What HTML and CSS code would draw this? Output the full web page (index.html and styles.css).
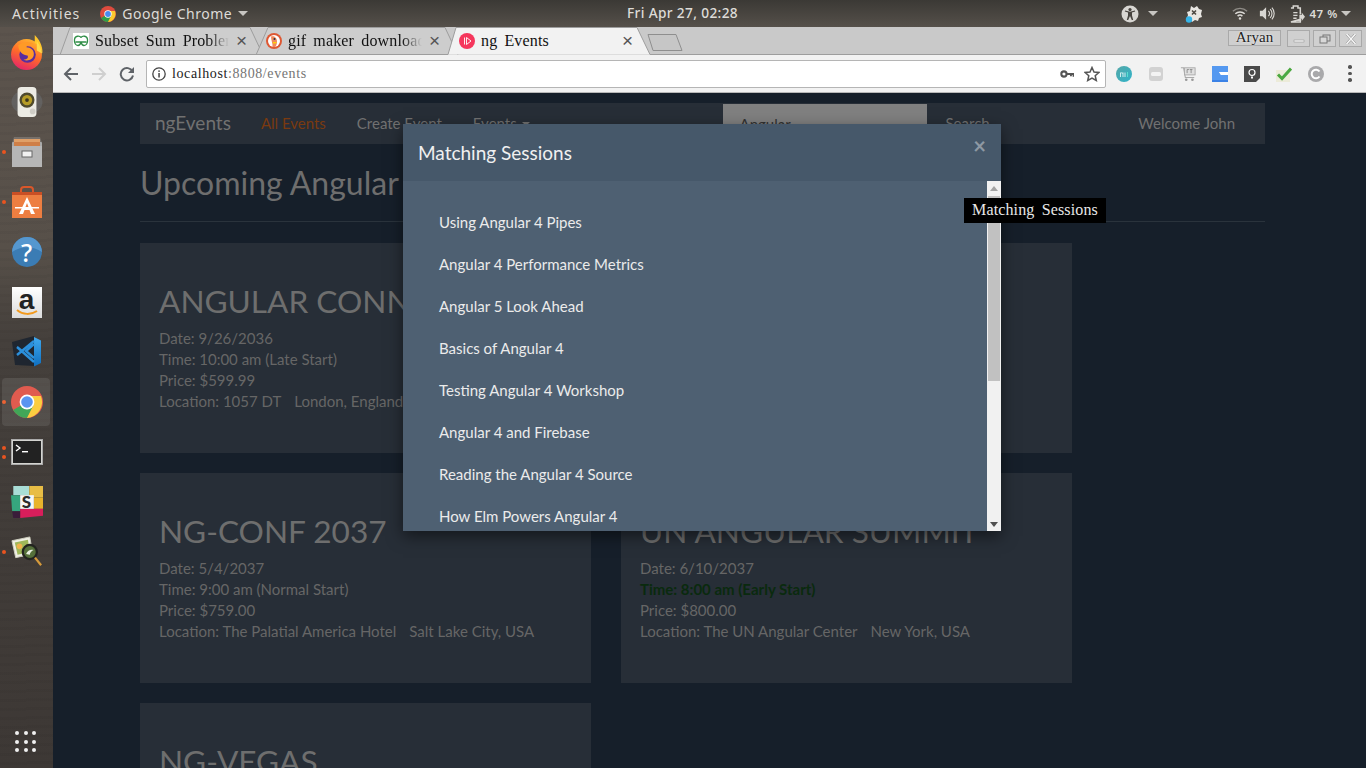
FILE: index.html
```html
<!DOCTYPE html>
<html lang="en">
<head>
<meta charset="utf-8">
<title>ng Events</title>
<link rel="stylesheet" href="styles.css">
</head>
<body>
<svg class="defs" width="0" height="0">
  <defs>
    <linearGradient id="fx" x1="0.7" y1="0" x2="0.3" y2="1"><stop offset="0" stop-color="#ffb52e"/><stop offset=".5" stop-color="#ff6a2a"/><stop offset="1" stop-color="#e3246a"/></linearGradient>
    <linearGradient id="vs" x1="0" y1="0" x2="0" y2="1"><stop offset="0" stop-color="#3fa9f0"/><stop offset="1" stop-color="#0f6fc0"/></linearGradient>
    <linearGradient id="mi" x1="0" y1="0" x2="1" y2="1"><stop offset="0" stop-color="#55a7a8"/><stop offset="1" stop-color="#2fb3c9"/></linearGradient>
    <symbol id="chrome" viewBox="0 0 32 32">
      <circle cx="16" cy="16" r="16" fill="#dd4b3e"/>
      <path d="M16 16 2.100 24A16 16 0 0 0 16 32l8-14z" fill="#2f9e48"/>
      <path d="M16 10h13.900A16 16 0 0 1 16 32l7-14z" fill="#fbc92e"/>
      <circle cx="16" cy="16" r="7.400" fill="#fff"/>
      <circle cx="16" cy="16" r="5.800" fill="#4a8bf0"/>
    </symbol>
  </defs>
</svg>

<header class="topbar">
  <div class="top-left">
    <span class="activities">Activities</span>
    <svg class="app-icon" viewBox="0 0 32 32"><use href="#chrome"/></svg>
    <span class="app-name">Google Chrome</span>
    <span class="caret"></span>
  </div>
  <div class="clock">Fri Apr 27, 02:28</div>
  <div class="top-right">
    <svg class="ti ti-a11y" viewBox="0 0 18 18"><circle cx="9" cy="9" r="8.500" fill="#d8d6d2"/><circle cx="9" cy="4.600" r="1.600" fill="#47433e"/><path d="M3.800 6.600 7 7.600v3L5.800 15h1.400L9 11l1.800 4h1.400L11 10.600v-3l3.200-1-.3-1.100L9 6.800 4.100 5.500z" fill="#47433e"/></svg>
    <span class="caret caret-a11y"></span>
    <svg class="ti ti-gear" viewBox="0 0 18 18"><path d="M6 1 9 3l3-2 2 3 3 1-1 4 1 3-3 1-1 3-3-1-3 2-2-3-3-1 1-3-1-3 3-1z" fill="#e8e6e2"/><path d="M7 5.500 11 9.500M11 5.500 7 9.500" stroke="#4c4842" stroke-width="1.600"/><circle cx="4" cy="14.500" r="3.200" fill="#35b4e8"/></svg>
    <svg class="ti ti-wifi" viewBox="0 0 18 14"><path d="M1 4.500a11.500 11.500 0 0 1 16 0" fill="none" stroke="#8f8c87" stroke-width="1.500"/><path d="M3.700 7.300a7.700 7.700 0 0 1 10.600 0M6.300 10a4 4 0 0 1 5.400 0" fill="none" stroke="#dddbd7" stroke-width="1.700"/><circle cx="9" cy="12.500" r="1.400" fill="#dddbd7"/></svg>
    <svg class="ti ti-vol" viewBox="0 0 18 16"><path d="M1 5h3l4-4v14l-4-4H1z" fill="#d8d6d2"/><path d="M10.500 5a4 4 0 0 1 0 6M12.500 3a7 7 0 0 1 0 10M14.500 1.500a9.500 9.500 0 0 1 0 13" fill="none" stroke="#d8d6d2" stroke-width="1.300"/></svg>
    <svg class="ti ti-bat" viewBox="0 0 16 19"><path d="M1 3h2.500V1h5v2H11v7M11 15v3H1z" fill="none" stroke="#d8d6d2" stroke-width="1.600"/><path d="M3.500 8H8M3.500 11H8M3.500 14H7" stroke="#d8d6d2" stroke-width="1.400"/><path d="M10 10.500h2.500V8l3.500 4.500-3.500 4.500v-2.500H10z" fill="#d8d6d2"/></svg>
    <span class="battery">47 %</span>
    <span class="caret caret-bat"></span>
  </div>
</header>

<div class="desktop">
  <nav class="dock">
    <div class="dock-item dock-fx">
      <svg viewBox="0 0 32 34"><circle cx="16" cy="19" r="15" fill="url(#fx)"/><path d="M24 0c4 4 8 10 7.500 18C30 13 28 9 24 8z" fill="#ffc62a"/><path d="M26 6c3 4 5 8 5 12l-5-3z" fill="#ffd84a"/><circle cx="17" cy="19" r="8" fill="#5b2d9f"/><path d="M8 10c5-4 12-4 15-1-3 0-7 0-7 3 4 0 8 3 7 8-1 4-6 6-10 4 4 0 5-2 4-4-4 0-9-4-9-10z" fill="#ff9a26"/></svg>
    </div>
    <div class="dock-item">
      <svg viewBox="0 0 34 34"><ellipse cx="17" cy="17" rx="16.500" ry="13" fill="#6c7074" opacity=".5"/><rect x="7" y="1" width="20" height="32" rx="4" fill="#ecebe4"/><circle cx="17" cy="15" r="8" fill="#4f4a2c"/><circle cx="17" cy="15" r="5.500" fill="#b59c26"/><circle cx="17" cy="15" r="2" fill="#3a361f"/><circle cx="23" cy="27" r="3" fill="#cfcdc6"/></svg>
    </div>
    <div class="dock-item has-dot">
      <svg viewBox="0 0 32 32"><path d="M3 1h26l2 6H1z" fill="#77706a"/><rect x="1" y="6" width="30" height="25" rx="1" fill="#a9a9a9"/><rect x="3" y="3" width="26" height="7" fill="#e0a068"/><rect x="3" y="6" width="26" height="4" fill="#cf7f47"/><rect x="1" y="10" width="30" height="21" fill="#b6b6b6"/><rect x="11" y="15" width="10" height="6" fill="#f1f1f1" stroke="#666"/></svg>
    </div>
    <div class="dock-item has-dot">
      <svg viewBox="0 0 32 32"><path d="M10 8V4q0-3 3-3h6q3 0 3 3v4" fill="none" stroke="#d9572a" stroke-width="2"/><path d="M1 6h30v26H1z" fill="#ed7e41"/><path d="M1 6h30v3H1z" fill="#c94f25"/><path d="M16 11 8 28h4l1.500-4h5l1.500 4h4zm0 6 1.500 4h-3z" fill="#fff"/><rect x="4" y="21" width="24" height="1.500" fill="#fff"/></svg>
    </div>
    <div class="dock-item">
      <svg viewBox="0 0 30 30"><circle cx="15" cy="15" r="14" fill="#3b7cb4"/><path d="M1 15a14 14 0 0 1 28 0 24 24 0 0 0-28 0z" fill="#5597cf"/></svg>
      <span class="help-mark">?</span>
    </div>
    <div class="dock-item">
      <span class="amazon">a<svg viewBox="0 0 24 8"><path d="M2 1c6 5 14 5 20 1" fill="none" stroke="#f29a1e" stroke-width="2"/></svg></span>
    </div>
    <div class="dock-item">
      <svg viewBox="0 0 32 32"><path d="M1 6 23 0l1 30-20-1z" fill="#1f2630"/><path d="M23 1l7 3.500V27l-7 3.500z" fill="url(#vs)"/><path d="m23 8-8 7 8 7M6 11l5 4-5 4M6 19 23 5M6 11l17 15" fill="none" stroke="#2b8fdb" stroke-width="2.400"/></svg>
    </div>
    <div class="dock-item is-active has-dot">
      <svg viewBox="0 0 32 32"><use href="#chrome"/></svg>
    </div>
    <div class="dock-item has-dot has-two">
      <svg viewBox="0 0 32 26"><rect x=".5" y=".5" width="31" height="25" fill="#d4d4d0" stroke="#aaa"/><rect x="2" y="2" width="28" height="22" fill="#222"/><path d="M5 6l4 3-4 3" fill="none" stroke="#fff" stroke-width="1.400"/><rect x="11" y="12" width="6" height="1.400" fill="#fff"/></svg>
    </div>
    <div class="dock-item">
      <svg viewBox="0 0 28 28"><path d="M2 0h14v8H2z" fill="#a9ddd6"/><path d="M16 0h12v10H16z" fill="#e8bd45"/><path d="M0 8h8v14H1z" fill="#36a67e"/><path d="M20 10h8v10h-8z" fill="#e9b32c"/><path d="M8 20h20v6L8 28z" fill="#d81e5b"/><path d="M1 22h7v6H2z" fill="#3a1d3a"/><rect x="8" y="8" width="12" height="12" fill="#f6f6f6"/></svg>
      <span class="slack-s">S</span>
    </div>
    <div class="dock-item has-dot">
      <svg viewBox="0 0 34 34"><path d="M1 5 20 1l3 18-18 4z" fill="#efefe4" stroke="#cfcfc0"/><path d="M4 7l14-3 2 13-13 3z" fill="#9fb75a"/><circle cx="9" cy="11" r="3" fill="#efb24a"/><circle cx="20" cy="17" r="7.500" fill="#55703a" stroke="#23241f" stroke-width="2.400"/><path d="M16 19c2-4 5-5 8-4-2 1-4 3-4 5z" fill="#e8eee0"/><path d="M25.500 23l6.500 8" stroke="#d59a3b" stroke-width="2.400"/></svg>
    </div>
    <div class="dock-grid">
      <i></i><i></i><i></i><i></i><i></i><i></i><i></i><i></i><i></i>
    </div>
  </nav>

  <main class="browser">
    <div class="tabstrip">
      <svg class="tab-shapes" width="1313" height="28" viewBox="0 0 1313 28">
        <path d="M7 28 17 .5H197L210 28" fill="#cdcdcd" stroke="#9d9d9d"/>
        <path d="M203 28 215 .5H392L405 28" fill="#cdcdcd" stroke="#9d9d9d"/>
        <path d="M0 27.500H395L403 .5H584L597 27.500H1313" fill="#f2f2f2" stroke="#9d9d9d"/>
        <path d="M595 7.500H623L629 23.500H600z" fill="#c6c6c6" stroke="#8e8e8e"/>
      </svg>
      <div class="tabs">
        <div class="tab tab-one">
          <svg class="favicon" viewBox="0 0 16 16"><rect width="16" height="16" fill="#fff"/><path d="M8 4.500C6.500 2.500 2 2.500 1.500 6.500S3 12.500 5 12.500 7.500 11 8 9H2.500M8 4.500C9.500 2.500 14 2.500 14.500 6.500S13 12.500 11 12.500 8.500 11 8 9H13.500" fill="none" stroke="#2f8d46" stroke-width="1.300"/></svg>
          <span class="tab-title">Subset Sum Problem</span>
          <span class="tab-close">×</span>
        </div>
        <div class="tab tab-two">
          <svg class="favicon" viewBox="0 0 16 16"><circle cx="8" cy="8" r="8" fill="#de5833"/><circle cx="8" cy="8" r="6" fill="#fff"/><path d="M5 3.500c3-1 6 1 6 5 0 3-1 4.500-2 5.500H6.500C7 11 5 7 5 3.500z" fill="#f08a5d"/><circle cx="8.500" cy="6" r="1" fill="#234"/><path d="M7 9h4l-1.500 1.500H7z" fill="#fdd20a"/></svg>
          <span class="tab-title">gif maker download</span>
          <span class="tab-close">×</span>
        </div>
        <div class="tab tab-three">
          <svg class="favicon" viewBox="0 0 16 16"><circle cx="8" cy="8" r="8" fill="#f5365c"/><path d="M5.500 4.500v7M7.500 4.500l4.500 3.500-4.500 3.500z" fill="none" stroke="#fff" stroke-width=".9"/></svg>
          <span class="tab-title tab-title-active">ng Events</span>
          <span class="tab-close">×</span>
        </div>
      </div>
      <div class="win-controls">
        <span class="win-user">Aryan</span>
        <span class="win-btn"><svg viewBox="0 0 14 10"><rect x="2" y="6" width="10" height="2" fill="#f4f4f4" stroke="#8d8d8d" stroke-width=".5"/></svg></span>
        <span class="win-btn"><svg viewBox="0 0 14 10"><rect x="5" y="1" width="7" height="6" fill="none" stroke="#777"/><rect x="2" y="3" width="7" height="6" fill="#d8d8d8" stroke="#777"/></svg></span>
        <span class="win-btn"><svg viewBox="0 0 14 10"><path d="M2.500 0 11.500 10M11.500 0 2.500 10" stroke="#8d8d8d" stroke-width="2.400"/><path d="M2.500 0 11.500 10M11.500 0 2.500 10" stroke="#f8f8f8" stroke-width="1.500"/></svg></span>
      </div>
    </div>

    <div class="toolbar">
      <svg class="tb-icon" viewBox="0 0 16 16"><path d="M15 8H2M8 2 2 8l6 6" fill="none" stroke="#5f6368" stroke-width="2"/></svg>
      <svg class="tb-icon" viewBox="0 0 16 16"><path d="M1 8h13M8 2l6 6-6 6" fill="none" stroke="#cfcfcf" stroke-width="2"/></svg>
      <svg class="tb-icon" viewBox="0 0 16 16"><path d="M13.500 5.500A6.200 6.200 0 1 0 14 9.500" fill="none" stroke="#5f6368" stroke-width="2"/><path d="M15 1v6H9z" fill="#5f6368"/></svg>
      <div class="omnibox">
        <svg class="omni-info" viewBox="0 0 14 14"><circle cx="7" cy="7" r="6.200" fill="none" stroke="#444" stroke-width="1.300"/><rect x="6.300" y="6" width="1.500" height="4.500" fill="#444"/><rect x="6.300" y="3.400" width="1.500" height="1.500" fill="#444"/></svg>
        <span class="url"><b>localhost</b>:8808/events</span>
        <svg class="omni-key" viewBox="0 0 16 10"><circle cx="4.500" cy="5" r="3" fill="none" stroke="#555" stroke-width="2.400"/><path d="M7 5h8.500v3M12.500 5v2.500" fill="none" stroke="#555" stroke-width="2.200"/></svg>
        <svg class="omni-star" viewBox="0 0 16 16"><path d="m8 1.500 2 4.500 4.800.5-3.600 3.200 1.100 4.800L8 12l-4.300 2.500 1.100-4.800L1.200 6.500 6 6z" fill="none" stroke="#555" stroke-width="1.500"/></svg>
      </div>
      <div class="extensions">
        <span class="ext"><svg viewBox="0 0 16 16"><circle cx="8" cy="8" r="8" fill="url(#mi)"/><path d="M4.500 11V6.500M7 11V6.500M4.500 7.500q1.200-1.500 2.500 0M9 11V6.500" fill="none" stroke="#cfeef0" stroke-width="1"/><path d="M11.500 11V6" stroke="#58e0d0"/></svg></span>
        <span class="ext"><svg viewBox="0 0 16 16"><rect x="1" y="1" width="14" height="14" rx="3" fill="#d2d2d2"/><rect x="3" y="6" width="10" height="4" rx="1.500" fill="#f3f3f3"/></svg></span>
        <span class="ext"><svg viewBox="0 0 18 18"><path d="M1 2h3l2 11h10" fill="none" stroke="#a9a9a9" stroke-width="1.200"/><rect x="5" y="2" width="12" height="8" fill="#dfdfdf" stroke="#a9a9a9"/><circle cx="7" cy="15.500" r="1.500" fill="#999"/><circle cx="14" cy="15.500" r="1.500" fill="#999"/><path d="M8 4h2M8 4v4M11 4h3M12.500 4v4" stroke="#888"/></svg></span>
        <span class="ext"><svg viewBox="0 0 16 16"><rect width="16" height="16" fill="#eaf2fd"/><rect width="16" height="6" fill="#5599f0"/><path d="M0 6h7l2 3h7v5H0z" fill="#5599f0"/><path d="M7 6h9v3H9z" fill="#fff"/><rect y="14" width="16" height="2" fill="#3b82e6"/></svg></span>
        <span class="ext"><svg viewBox="0 0 16 16"><path d="M0 0h16v12l-4 4H0z" fill="#4a4a4a"/><circle cx="8" cy="6.500" r="3" fill="none" stroke="#fff" stroke-width="1.200"/><path d="M7 10.500h2v2H7z" fill="#fff"/></svg></span>
        <span class="ext"><svg viewBox="0 0 16 16"><rect x="0" y="4" width="14" height="12" fill="#ecebd9"/><path d="M2 8.500 6 12.500 15 2.500" fill="none" stroke="#4aa83e" stroke-width="3"/></svg></span>
        <span class="ext"><svg viewBox="0 0 16 16"><circle cx="8" cy="8" r="8" fill="#a9a9ab"/><path d="M11.500 5.500a4.300 4.300 0 1 0 0 5" fill="none" stroke="#fff" stroke-width="2"/></svg></span>
        <span class="ext-menu"><i></i><i></i><i></i></span>
      </div>
    </div>

    <div class="page">
      <div class="container">
        <div class="navbar">
          <span class="brand">ngEvents</span>
          <span class="nav-link nav-current">All Events</span>
          <span class="nav-link nav-create">Create Event</span>
          <span class="nav-link nav-events">Events <span class="nav-caret"></span></span>
          <span class="nav-input">Angular</span>
          <span class="nav-link nav-search">Search</span>
          <span class="nav-link nav-welcome">Welcome John</span>
        </div>
        <h1 class="heading">Upcoming Angular Events</h1>
        <div class="grid">
          <article class="card">
            <h2>ANGULAR CONNECT</h2>
            <p>Date: 9/26/2036</p>
            <p>Time: 10:00 am (Late Start)</p>
            <p>Price: $599.99</p>
            <p>Location: 1057 DT<span class="loc-gap">London, England</span></p>
          </article>
          <article class="card">
            <h2>NG-NL</h2>
            <p>Date: 4/15/2037</p>
            <p>Time: 9:00 am (Normal Start)</p>
            <p>Price: $950.00</p>
            <p>Location: The Palatial America Hotel</p>
          </article>
          <article class="card">
            <h2>NG-CONF 2037</h2>
            <p>Date: 5/4/2037</p>
            <p>Time: 9:00 am (Normal Start)</p>
            <p>Price: $759.00</p>
            <p>Location: The Palatial America Hotel<span class="loc-gap">Salt Lake City, USA</span></p>
          </article>
          <article class="card">
            <h2>UN ANGULAR SUMMIT</h2>
            <p>Date: 6/10/2037</p>
            <p class="early">Time: 8:00 am (Early Start)</p>
            <p>Price: $800.00</p>
            <p>Location: The UN Angular Center<span class="loc-gap">New York, USA</span></p>
          </article>
          <article class="card">
            <h2>NG-VEGAS</h2>
          </article>
        </div>
      </div>

      <section class="modal">
        <div class="modal-head">
          <span class="modal-title">Matching Sessions</span>
          <span class="modal-close">×</span>
        </div>
        <div class="modal-body">
          <ul class="sessions">
            <li>Using Angular 4 Pipes</li>
            <li>Angular 4 Performance Metrics</li>
            <li>Angular 5 Look Ahead</li>
            <li>Basics of Angular 4</li>
            <li>Testing Angular 4 Workshop</li>
            <li>Angular 4 and Firebase</li>
            <li>Reading the Angular 4 Source</li>
            <li>How Elm Powers Angular 4</li>
          </ul>
          <div class="scrollbar">
            <span class="sb-up"></span>
            <span class="sb-track"><span class="sb-thumb"></span></span>
            <span class="sb-down"></span>
          </div>
        </div>
      </section>
      <div class="tooltip">Matching Sessions</div>
    </div>
  </main>
</div>
</body>
</html>
```

FILE: styles.css
```css
* { box-sizing: border-box; }
html, body { margin: 0; height: 100%; overflow: hidden; }
body { display: flex; flex-direction: column; width: 1366px; height: 768px; font-family: Lato, sans-serif; background: #161f2a; }
.defs { position: absolute; }
svg { display: block; }

/* GNOME top bar */
.topbar { position: relative; flex: 0 0 27px; display: flex; align-items: center; justify-content: space-between; background: linear-gradient(#3b3935, #55504a); color: #dedcd8; font: 14px "Noto Sans", "Open Sans", sans-serif; letter-spacing: .35px; }
.top-left { display: flex; align-items: center; padding-left: 12px; }
.activities { letter-spacing: 1px; }
.app-icon { width: 16px; height: 16px; margin-left: 20px; }
.app-name { margin-left: 6px; letter-spacing: .5px; }
.caret { display: inline-block; width: 0; height: 0; border-left: 5px solid transparent; border-right: 5px solid transparent; border-top: 5px solid #c8c6c2; margin-left: 6px; }
.clock { position: absolute; left: 627px; top: 3px; font-weight: 500; font-size: 13.700px; }
.top-right { display: flex; align-items: center; padding-right: 15px; }
.ti-a11y { width: 18px; height: 18px; }
.caret-a11y { margin-left: 9px; }
.ti-gear { width: 18px; height: 18px; margin-left: 27px; }
.ti-wifi { width: 16px; height: 13px; margin-left: 29px; }
.ti-vol { width: 16px; height: 15px; margin-left: 11px; }
.ti-bat { width: 15px; height: 18px; margin-left: 15px; }
.battery { margin-left: 4px; font-size: 11.500px; font-weight: 600; letter-spacing: .6px; }
.caret-bat { margin-left: 3px; }

.desktop { flex: 1; display: flex; min-height: 0; }

/* dock */
.dock { position: relative; flex: 0 0 53px; display: flex; flex-direction: column; padding-bottom: 1px; background: repeating-linear-gradient(178deg, rgba(0,0,0,0) 0 6px, rgba(0,0,0,.03) 6px 9px), linear-gradient(#5c544d 0, #575049 30%, #45403c 42%, #3d3835 100%); }
.dock-item { position: relative; flex: 0 0 50px; display: flex; align-items: center; justify-content: center; }
.dock-item > svg { width: 32px; height: 32px; }
.dock-fx > svg { width: 33px; height: 35px; }
.has-dot::before { content: ""; position: absolute; left: 2px; top: 23px; width: 4px; height: 4px; border-radius: 50%; background: #e95420; }
.has-two::before { top: 19px; box-shadow: 0 9px 0 #e95420; }
.is-active::after { content: ""; position: absolute; left: 2px; top: 1px; width: 48px; height: 48px; border-radius: 4px; background: rgba(255,255,255,.09); }
.help-mark { position: absolute; left: 0; right: 0; top: 8px; text-align: center; color: #fff; font: 500 25px "Noto Sans", sans-serif; }
.amazon { position: relative; width: 30px; height: 31px; background: linear-gradient(#fff, #dcdcdc); color: #222; font: 700 28px/25px "Liberation Sans", sans-serif; text-align: center; }
.amazon svg { position: absolute; left: 3px; bottom: 1px; width: 24px; height: 8px; }
.slack-s { position: absolute; left: 0; right: 0; top: 14px; text-align: center; font: 900 17px "Lato", sans-serif; color: #2b2b2b; }
.dock-grid { margin-top: auto; margin-left: 15px; margin-bottom: 15px; width: 22px; display: grid; grid-template-columns: repeat(3, 4px); gap: 4.500px; }
.dock-grid i { width: 4px; height: 4px; border-radius: 50%; background: #f0f0f0; }

/* browser frame */
.browser { flex: 1; display: flex; flex-direction: column; min-width: 0; }
.tabstrip { position: relative; flex: 0 0 28px; background: #c9c9c9; }
.tab-shapes { position: absolute; left: 0; top: 0; }
.tabs { position: relative; display: flex; height: 28px; }
.tab { display: flex; align-items: center; position: relative; height: 28px; }
.tab-one { width: 195px; padding-left: 20px; }
.tab-two { width: 193px; padding-left: 18px; }
.tab-three { width: 192px; padding-left: 18px; }
.tab .favicon { flex: 0 0 16px; width: 16px; height: 16px; }
.tab-title { font: 16px "Liberation Serif", serif; letter-spacing: .15px; word-spacing: 3px; color: #111; margin-left: 6px; width: 134px; white-space: nowrap; overflow: hidden; -webkit-mask-image: linear-gradient(90deg, #000 85%, transparent); mask-image: linear-gradient(90deg, #000 85%, transparent); }
.tab-title-active { width: 141px; -webkit-mask-image: none; mask-image: none; }
.tab-close { margin-left: 7px; font: 19px/20px "Liberation Sans", sans-serif; color: #555; }
.win-controls { position: absolute; right: 4px; top: 3px; display: flex; gap: 3px; }
.win-user { width: 53px; height: 16px; margin-right: 3px; border: 1px solid #a9a9a9; background: #cfcfcf; font: 15px/13px "Liberation Serif", serif; text-align: center; color: #222; text-shadow: 0 0 2px #fff; }
.win-btn { width: 23px; height: 17px; border: 1px solid #a9a9a9; background: #d0d0d0; display: flex; align-items: center; justify-content: center; }
.win-btn svg { width: 14px; height: 10px; }

.toolbar { flex: 0 0 38px; display: flex; align-items: center; background: #f2f2f2; border-bottom: 1px solid #b8b8b8; padding-left: 10px; }
.tb-icon { width: 16px; height: 16px; margin-right: 12px; }
.omnibox { width: 960px; height: 28px; margin-left: -1px; display: flex; align-items: center; background: #fff; border: 1px solid #b5b5b5; border-radius: 2px; padding: 0 5px; }
.omni-info { width: 14px; height: 14px; }
.url { margin-left: 6px; font: 14px "Liberation Serif", "DejaVu Serif", serif; letter-spacing: .6px; color: #757575; }
.url b { font-weight: 400; color: #222; }
.omni-key { width: 14px; height: 10px; margin-left: auto; }
.omni-star { width: 16px; height: 16px; margin-left: 10px; }
.extensions { display: flex; align-items: center; margin-left: 10px; gap: 16px; }
.ext { display: block; width: 16px; height: 16px; }
.ext svg { width: 16px; height: 16px; }
.ext-menu { display: flex; flex-direction: column; gap: 3px; margin-left: 8px; }
.ext-menu i { width: 3.500px; height: 3.500px; border-radius: 50%; background: #555; }

/* page beneath the modal backdrop */
.page { position: relative; flex: 1; overflow: hidden; background: #161f2a; color: #717171; }
.container { padding: 10px 0 0 87px; width: 1212px; }
.navbar { position: relative; height: 41px; padding-bottom: 2px; display: flex; align-items: center; background: #272e37; font-size: 15px; }
.brand { margin-left: 15px; font-size: 19px; }
.nav-link { font-size: 15px; }
.nav-current { margin-left: 30px; color: #7a3a10; }
.nav-create { margin-left: 31px; }
.nav-events { margin-left: 31px; }
.nav-caret { display: inline-block; width: 0; height: 0; margin-left: 1px; border-left: 4px solid transparent; border-right: 4px solid transparent; border-top: 4px solid #717171; vertical-align: 3px; }
.nav-input { margin-left: 193px; width: 204px; height: 40px; align-self: flex-start; margin-top: 1px; padding: 11px 17px; background: #808080; color: #333; font-size: 15px; }
.nav-search { margin-left: 19px; }
.nav-welcome { margin-left: auto; margin-right: 30px; }
.heading { margin: 0; height: 78px; padding-top: 15px; border-bottom: 1px solid #2a333c; font: 400 32px/47px Lato, sans-serif; white-space: nowrap; color: #6e6e6e; }
.grid { display: grid; grid-template-columns: 451px 451px; gap: 20px 30px; margin-top: 21px; }
.card { height: 210px; background: #272e37; padding: 36px 19px 0; }
.card h2 { margin: 0 0 5px; font: 400 31.600px/44px Lato, sans-serif; white-space: nowrap; color: #6e6e6e; }
.card p { margin: 0; font-size: 15px; line-height: 21px; white-space: nowrap; color: #666; }
.card .early { color: #0a2a0e; font-weight: 700; }
.loc-gap { margin-left: 13px; }

/* modal */
.modal { position: absolute; left: 350px; top: 31px; width: 598px; height: 407px; display: flex; flex-direction: column; box-shadow: 0 5px 15px rgba(0,0,0,.5); }
.modal-head { flex: 0 0 57px; position: relative; display: flex; align-items: center; padding-left: 15px; background: #46586a; }
.modal-title { color: #f0f0f0; font-size: 19px; }
.modal-close { position: absolute; right: 15px; top: 8px; font: 700 22px/28px Lato, sans-serif; color: #8e99a4; }
.modal-body { flex: 1; display: flex; min-height: 0; background: #4e6072; overflow: hidden; }
.sessions { flex: 1; margin: 0; padding: 20px 0 0 36px; list-style: none; color: #ebebeb; font-size: 15px; }
.sessions li { height: 42px; line-height: 42px; }
.scrollbar { flex: 0 0 14px; display: flex; flex-direction: column; background: #f1f1f1; }
.sb-up, .sb-down { flex: 0 0 15px; position: relative; }
.sb-up::after, .sb-down::after { content: ""; position: absolute; left: 3px; border-left: 4px solid transparent; border-right: 4px solid transparent; }
.sb-up::after { top: 5px; border-bottom: 5px solid #a3a3a3; }
.sb-down::after { bottom: 4px; border-top: 5px solid #505050; }
.sb-track { flex: 1; padding: 0 1px; }
.sb-thumb { display: block; height: 185px; background: #c1c1c1; }

.tooltip { position: absolute; left: 911px; top: 105px; width: 142px; height: 25px; background: #000; color: #e8e8e8; font: 16px/24px "Liberation Serif", serif; letter-spacing: .15px; word-spacing: 3px; text-align: center; white-space: nowrap; }
```
